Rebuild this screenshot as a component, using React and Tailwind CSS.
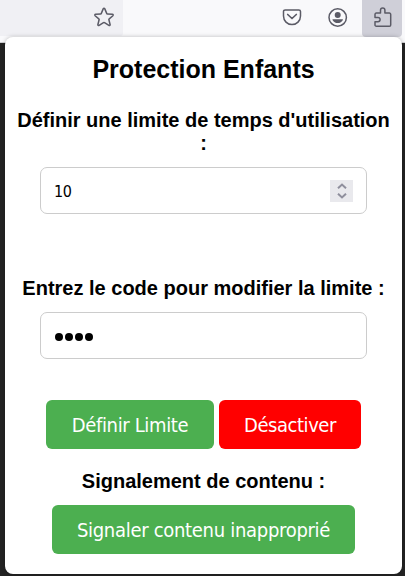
import React from "react";

function StarIcon() {
  return (
    <svg className="h-5 w-5" viewBox="0 0 20 20" fill="none" stroke="#5b5b66" strokeWidth="1.5" strokeLinejoin="round">
      <path d="M9.3 1.6a.8.8 0 0 1 1.4 0l2 4.8c.1.3.4.5.7.5l5 .4c.8.1 1 .9.5 1.4l-3.7 3.2c-.3.2-.4.5-.3.8l1.2 4.8c.2.8-.6 1.3-1.2.9l-4.4-2.7a1 1 0 0 0-1 0l-4.4 2.7c-.6.4-1.4-.1-1.2-.9l1.2-4.8c.1-.3 0-.6-.3-.8L1.1 8.7c-.5-.5-.3-1.3.5-1.4l5-.4c.3 0 .6-.2.7-.5z" />
    </svg>
  );
}

function PocketIcon() {
  return (
    <svg className="h-5 w-5" viewBox="0 0 20 20" fill="none" stroke="#5b5b66" strokeWidth="1.5" strokeLinecap="round" strokeLinejoin="round">
      <path d="M3.2 2.9h13.6a1.700 1.700 0 0 1 1.700 1.700v4.500a8.500 8.500 0 0 1-17 0V4.600a1.700 1.700 0 0 1 1.700-1.700z" />
      <path d="M5.700 7.500 10 11.500l4.300-4" strokeWidth="1.700" />
    </svg>
  );
}

function AccountIcon() {
  return (
    <svg className="h-5 w-5" viewBox="0 0 20 20" fill="none">
      <circle cx="9.700" cy="10.500" r="8.700" stroke="#5b5b66" strokeWidth="1.5" />
      <circle cx="9.700" cy="8" r="3" fill="#5b5b66" />
      <path d="M4.900 12.300h9.600c.4 0 .6.3.4.700a5.900 5.900 0 0 1-10.400 0c-.2-.4 0-.7.4-.7z" fill="#5b5b66" />
    </svg>
  );
}

function PuzzleIcon() {
  return (
    <svg className="h-[22px] w-5" viewBox="0 0 20 22" fill="none" stroke="#5b5b66" strokeWidth="1.5" strokeLinejoin="round">
      <path d="M3.300 7.100h4.200V4.200a2.200 2.200 0 0 1 4.400 0v2.900h4.500a1.300 1.300 0 0 1 1.300 1.300v10.500a1.300 1.300 0 0 1-1.300 1.300H3.300A1.300 1.300 0 0 1 2 18.900v-3.100h2.900a2.200 2.200 0 0 0 0-4.400H2v-3a1.300 1.300 0 0 1 1.300-1.300z" />
    </svg>
  );
}

function Stepper() {
  return (
    <div className="flex h-[22px] w-[23px] flex-col items-center justify-between bg-[#e9e9ed] py-[3px] text-[#8f8f9d]">
      <svg className="h-[6px] w-[10px]" viewBox="0 0 10 6" fill="none" stroke="currentColor" strokeWidth="2">
        <path d="M1 5.300 5 1.600 9 5.300" />
      </svg>
      <svg className="h-[6px] w-[10px]" viewBox="0 0 10 6" fill="none" stroke="currentColor" strokeWidth="2">
        <path d="M1 .7 5 4.400 9 .7" />
      </svg>
    </div>
  );
}

function Heading({ className, children }) {
  return <h3 className={"text-center text-[20px] leading-[23px] font-bold " + className}>{children}</h3>;
}

function Button({ className, children }) {
  return (
    <button
      className={
        "h-[49px] shrink-0 rounded-[6px] pt-px text-center font-['DejaVu_Sans_Condensed','DejaVu_Sans',sans-serif] text-[20px] font-normal [font-stretch:condensed] whitespace-nowrap text-white " +
        className
      }
    >
      {children}
    </button>
  );
}

export default function App() {
  return (
    <div className="h-[576px] w-[405px] overflow-hidden bg-[#232323] font-['Liberation_Sans',Arial,sans-serif] text-black">
      <header className="flex h-[43px] items-start border-b border-[#cfcfd2] bg-[#f9f9fb]">
        <div className="flex h-9 w-[123px] justify-end rounded-br-[3px] bg-[#f0f0f4] pt-[7px] pr-[9px]">
          <StarIcon />
        </div>
        <div className="flex w-[239px] justify-end gap-[26px] pt-[7px] pr-[14px]">
          <PocketIcon />
          <AccountIcon />
        </div>
        <div className="flex h-[37px] w-10 justify-center rounded-b-[4px] bg-[#cfcfd8] pt-[6px] pl-[2px]">
          <PuzzleIcon />
        </div>
      </header>

      <main className="relative -mt-[6px] ml-[5px] flex h-[537px] w-[397px] flex-col items-center rounded-[8px] bg-white pt-[18px] shadow-[0_0_4px_rgba(0,0,0,0.25)]">
        <h2 className="text-[25px] leading-7 font-bold">Protection Enfants</h2>
        <Heading className="mt-[26px] w-[377px]">Définir une limite de temps d'utilisation :</Heading>
        <div className="mt-3 flex h-[47px] w-[327px] items-center justify-between rounded-[7px] border border-[#cccccc] px-[13px] font-['DejaVu_Sans_Condensed','DejaVu_Sans',sans-serif] text-[16px] tracking-[-0.4px] [font-stretch:condensed]">
          <span className="pt-[2px]">10</span>
          <Stepper />
        </div>

        <Heading className="mt-[63px]">Entrez le code pour modifier la limite :</Heading>
        <div className="mt-3 flex h-[47px] w-[327px] items-center gap-[2px] rounded-[7px] border border-[#cccccc] pt-[3px] pl-[14px]">
          {[0, 1, 2, 3].map((i) => (
            <span key={i} className="h-2 w-2 rounded-full bg-black" />
          ))}
        </div>

        <div className="mt-[41px] flex gap-[5px]">
          <Button className="w-[168px] bg-[#4caf50] tracking-[-0.35px]">Définir Limite</Button>
          <Button className="w-[142px] bg-[#ff0000] tracking-[-0.45px]">Désactiver</Button>
        </div>

        <Heading className="mt-[21px]">Signalement de contenu :</Heading>
        <Button className="mt-3 w-[303px] bg-[#4caf50] tracking-[-0.3px]">Signaler contenu inapproprié</Button>
      </main>
    </div>
  );
}
